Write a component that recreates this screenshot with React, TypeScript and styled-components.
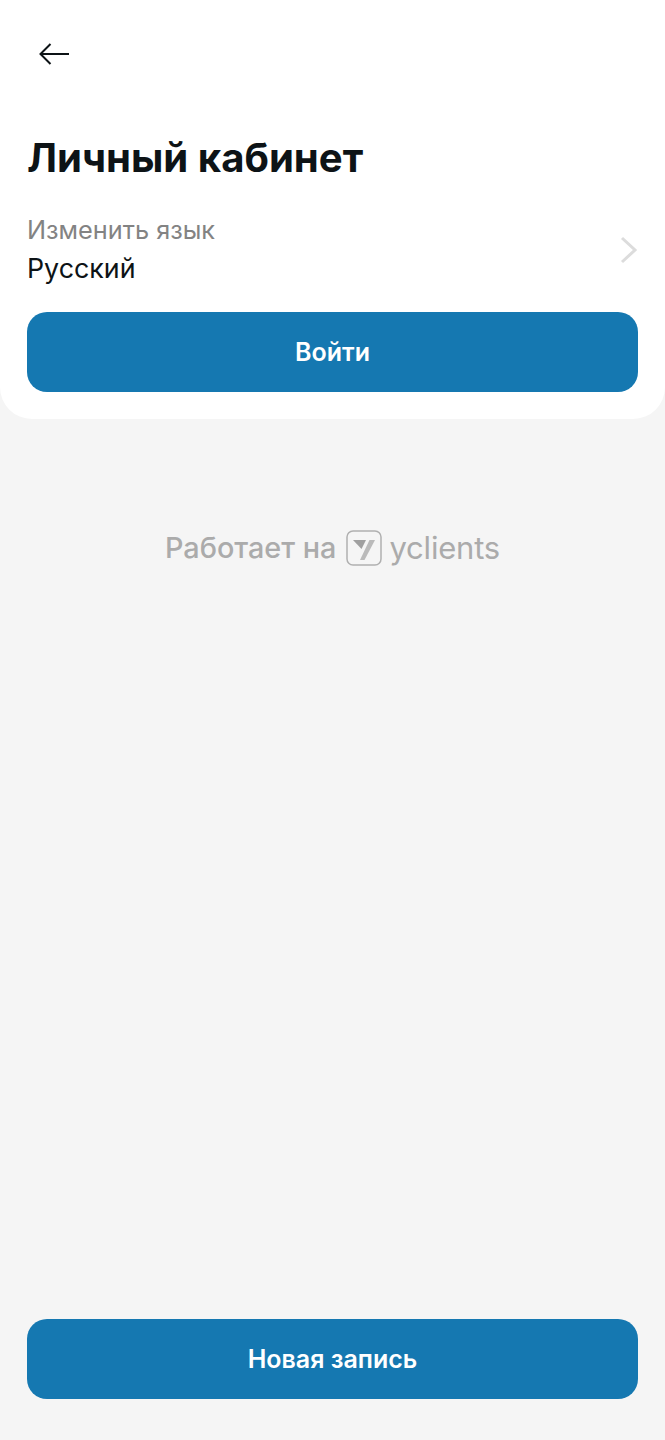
import { FC } from "react";
import styled, { createGlobalStyle } from "styled-components";

const GlobalStyle = createGlobalStyle`
  html, body {
    margin: 0;
    padding: 0;
    background: #f5f5f5;
  }
  * {
    box-sizing: border-box;
  }
`;

const App: FC = () => {
  return (
    <Page>
      <GlobalStyle />
      <Card>
        <BackButton aria-label="Назад">
          <svg width="32" height="24" viewBox="0 0 32 24" fill="none">
            <path
              d="M30 12H2M11.5 2L1.5 12L11.5 22"
              stroke="#0d1316"
              strokeWidth="2"
            />
          </svg>
        </BackButton>
        <Title>Личный кабинет</Title>
        <LanguageRow>
          <div>
            <LanguageLabel>Изменить язык</LanguageLabel>
            <LanguageValue>Русский</LanguageValue>
          </div>
          <Chevron width="18" height="28" viewBox="0 0 18 28" fill="none">
            <path d="M2 2L15 14L2 26" stroke="#dcdcdc" strokeWidth="3" />
          </Chevron>
        </LanguageRow>
        <PrimaryButton>Войти</PrimaryButton>
      </Card>
      <PoweredBy>
        <span>Работает на</span>
        <LogoBox>
          <svg width="36" height="36" viewBox="0 0 36 36" fill="none">
            <rect
              x="1"
              y="1"
              width="34"
              height="34"
              rx="6"
              stroke="#b0b0b0"
              strokeWidth="1.5"
            />
            <path d="M7 10H20L15.500 19Z" fill="#a0a0a0" />
            <path d="M29 10L18.500 30H14L23.500 10Z" fill="#bababa" />
          </svg>
        </LogoBox>
        <LogoWord>yclients</LogoWord>
      </PoweredBy>
      <Footer>
        <PrimaryButton>Новая запись</PrimaryButton>
      </Footer>
    </Page>
  );
};

const Page = styled.div`
  min-height: 1440px;
  display: flex;
  flex-direction: column;
  background: #f5f5f5;
  font-family: Inter, "Noto Sans", sans-serif;
`;

const Card = styled.div`
  height: 419px;
  padding: 42px 27px 0;
  background: #ffffff;
  border-radius: 0 0 32px 32px;
`;

const BackButton = styled.button`
  display: block;
  width: 32px;
  height: 24px;
  margin-left: 12px;
  padding: 0;
  border: none;
  background: none;
`;

const Title = styled.h1`
  margin: 69px 0 0;
  font-size: 40.100px;
  line-height: 46px;
  font-weight: 700;
  color: #0d1316;
`;

const LanguageRow = styled.div`
  display: flex;
  align-items: center;
  justify-content: space-between;
  margin-top: 30px;
  padding-bottom: 25px;
`;

const Chevron = styled.svg`
  margin-top: 1px;
`;

const LanguageLabel = styled.div`
  font-size: 25.300px;
  line-height: 38px;
  color: #838383;
`;

const LanguageValue = styled.div`
  font-size: 26.800px;
  line-height: 38px;
  color: #0d1316;
`;

const PrimaryButton = styled.button`
  display: block;
  width: 100%;
  height: 80px;
  border: none;
  border-radius: 20px;
  background: #1578b1;
  color: #ffffff;
  font-family: inherit;
  font-size: 25px;
  font-weight: 600;
`;

const PoweredBy = styled.div`
  display: flex;
  align-items: center;
  justify-content: center;
  margin-top: 110px;
  color: #ababab;
  font-size: 28.800px;
  font-weight: 500;
`;

const LogoBox = styled.span`
  display: flex;
  margin: 0 7px 0 10px;
`;

const LogoWord = styled.span`
  font-size: 31px;
  font-weight: 400;
  letter-spacing: -0.2px;
`;

const Footer = styled.div`
  margin-top: auto;
  padding: 0 27px 41px;
`;

export default App;
